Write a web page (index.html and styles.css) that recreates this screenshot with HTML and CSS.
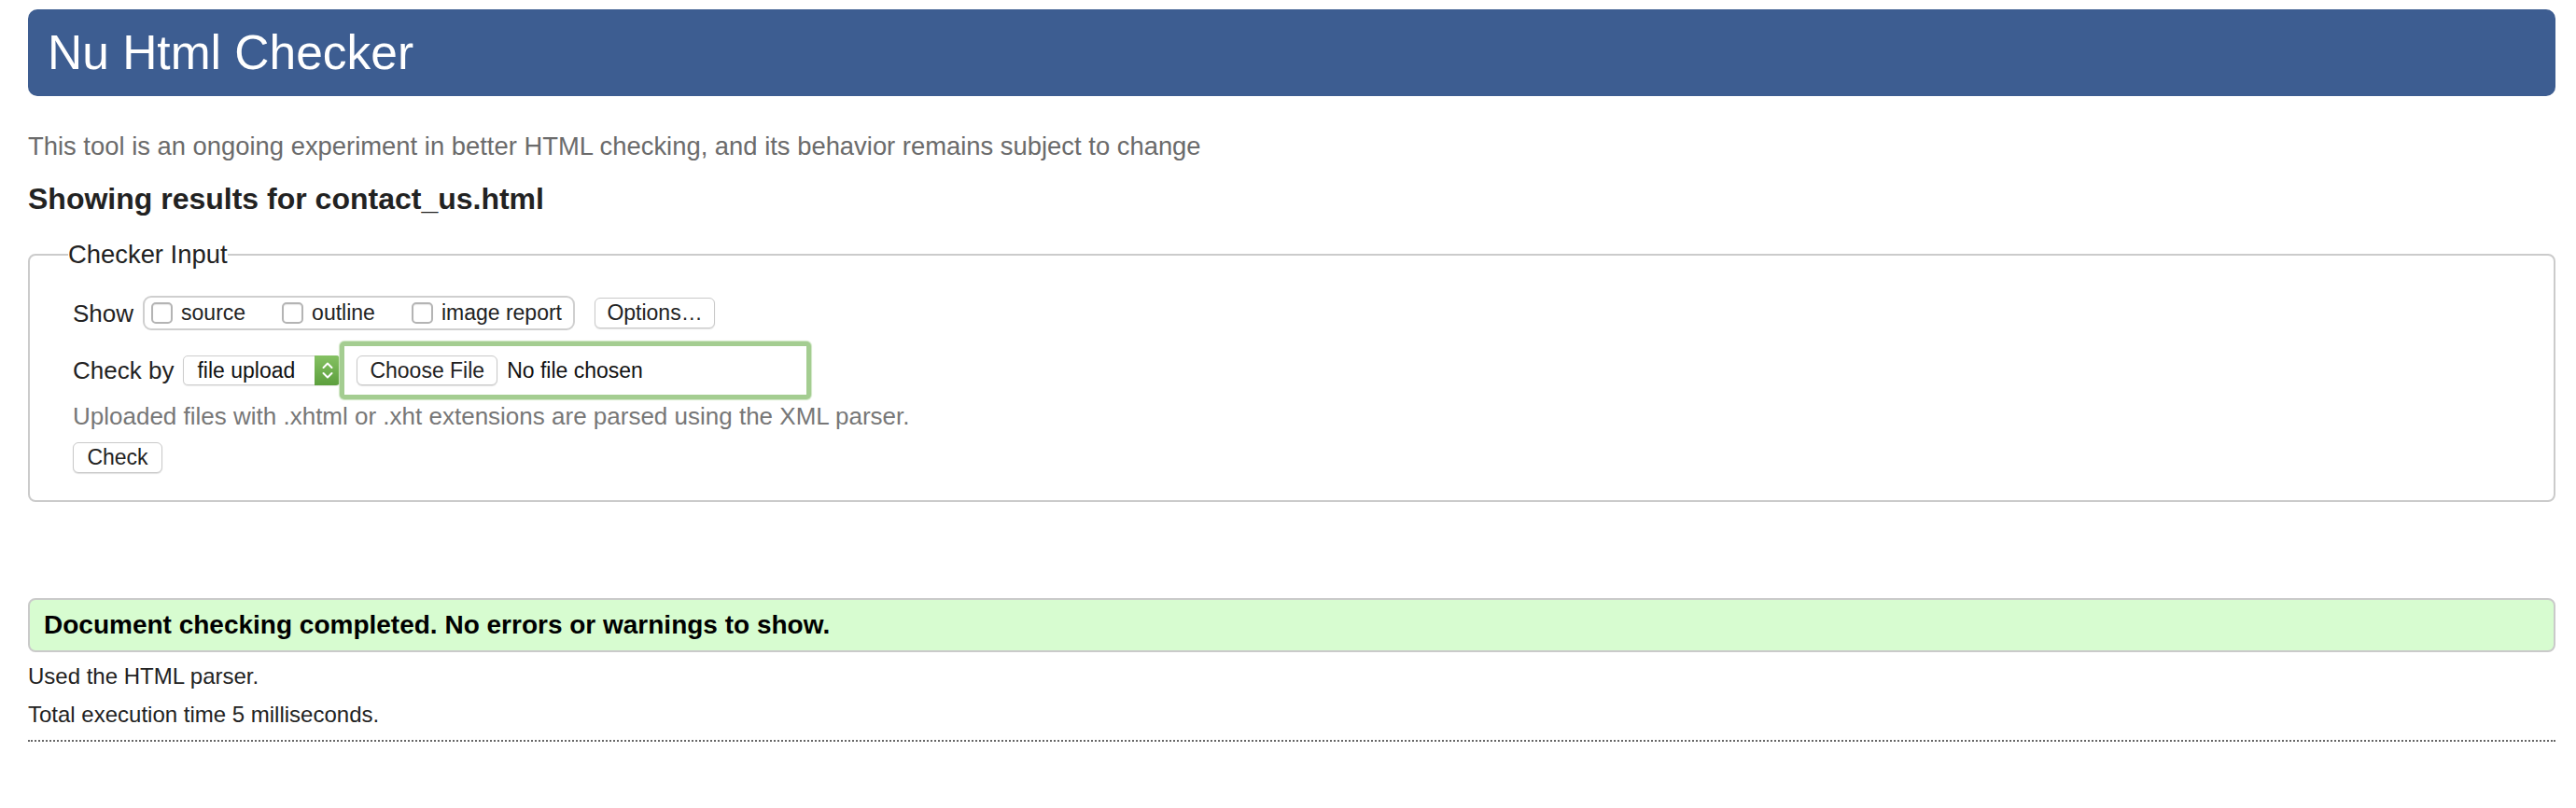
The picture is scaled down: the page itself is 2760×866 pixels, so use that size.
FILE: index.html
```html
<!DOCTYPE html>
<html lang="en">
<head>
<meta charset="utf-8">
<title>Nu Html Checker</title>
<link rel="stylesheet" href="styles.css">
</head>
<body>
<h1 class="title">Nu Html Checker</h1>
<p class="intro">This tool is an ongoing experiment in better HTML checking, and its behavior remains subject to change</p>
<h2 class="subject">Showing results for contact_us.html</h2>
<form class="checker-form">
  <fieldset class="checker">
    <legend class="checker-legend">Checker Input</legend>
    <div class="row">
      <span class="label">Show</span>
      <span class="group">
        <label class="opt"><span class="cb"></span>source</label>
        <label class="opt"><span class="cb"></span>outline</label>
        <label class="opt"><span class="cb"></span>image report</label>
      </span>
      <span class="btn options">Options…</span>
    </div>
    <div class="row row-by">
      <span class="label">Check by</span>
      <span class="select">
        <span class="select-text">file upload</span>
        <span class="stepper">
          <svg width="28" height="32" viewBox="0 0 28 32"><path d="M9.5 13 L14 8.5 L18.5 13 M9.5 19 L14 23.5 L18.5 19" fill="none" stroke="#fff" stroke-width="2" stroke-linecap="round" stroke-linejoin="round"/></svg>
        </span>
      </span>
      <span class="filebox">
        <span class="btn choose">Choose File</span>
        <span class="nofile">No file chosen</span>
      </span>
    </div>
    <p class="hint">Uploaded files with .xhtml or .xht extensions are parsed using the XML parser.</p>
    <span class="btn check">Check</span>
  </fieldset>
</form>
<div class="success">Document checking completed. No errors or warnings to show.</div>
<p class="details">Used the HTML parser.</p>
<p class="details">Total execution time 5 milliseconds.</p>
<hr class="dotted">
</body>
</html>
```
FILE: styles.css
```css
html, body {
  background: #fff;
}
body {
  margin: 0;
  padding: 10px 22px 0 30px;
  font-family: "Liberation Sans", Arial, Helvetica, sans-serif;
  color: #222;
}
.title {
  margin: 0;
  height: 93px;
  line-height: 93px;
  padding-left: 21px;
  font-size: 51.5px;
  font-weight: normal;
  color: #fff;
  background: #3d5d91;
  border-radius: 10px;
}
.intro {
  margin: 39px 0 0;
  font-size: 27.4px;
  line-height: 30px;
  color: #6b6b6b;
}
.subject {
  margin: 23px 0 30px;
  font-size: 32px;
  line-height: 36px;
  font-weight: bold;
  color: #222;
}
.checker-form {
  margin: 0;
}
.checker {
  margin: 0;
  border: 2px solid #cbcbcb;
  border-radius: 8px;
  padding: 32px 20px 29px 46px;
  min-inline-size: 0;
}
.checker-legend {
  margin-left: -5px;
  padding: 0;
  font-size: 27.4px;
  line-height: 24px;
  color: #222;
}
.row {
  display: flex;
  align-items: center;
}
.row-by {
  margin-top: 12px;
}
.label {
  font-size: 26px;
  line-height: 30px;
  color: #222;
  margin-right: 10px;
  white-space: nowrap;
}
.group {
  display: flex;
  align-items: center;
  height: 33px;
  border: 2px solid #cfcfcf;
  border-radius: 9px;
  padding: 0 12px 0 7px;
  gap: 39px;
}
.opt {
  display: flex;
  align-items: center;
  gap: 9px;
  font-size: 23px;
  color: #222;
  white-space: nowrap;
}
.cb {
  display: inline-block;
  width: 19px;
  height: 19px;
  border: 2px solid #b4b4b4;
  border-radius: 5px;
  background: #fff;
  box-shadow: inset 0 1px 1px rgba(0,0,0,0.08);
}
.btn {
  display: inline-flex;
  align-items: center;
  justify-content: center;
  box-sizing: border-box;
  height: 33px;
  padding: 0 15px;
  font-size: 23px;
  color: #222;
  background: #fff;
  border: 1px solid #c9c9c9;
  border-radius: 6px;
  box-shadow: 0 1px 1px rgba(0,0,0,0.12);
  white-space: nowrap;
}
.options {
  margin-left: 21px;
  width: 129px;
}
.select {
  display: flex;
  align-items: stretch;
  box-sizing: border-box;
  width: 169px;
  height: 32px;
  border: 1px solid #cdcdcd;
  border-radius: 5px;
  background: #fff;
  box-shadow: 0 1px 1px rgba(0,0,0,0.08);
}
.select-text {
  flex: 1;
  display: flex;
  align-items: center;
  padding-left: 14px;
  font-size: 23px;
  color: #111;
  white-space: nowrap;
}
.stepper {
  width: 28px;
  margin: -1px -1px -1px 0;
  border-radius: 0 5px 5px 0;
  background: linear-gradient(#85c163, #5c9f3d);
  display: flex;
  align-items: center;
  justify-content: center;
}
.stepper svg {
  display: block;
}
.filebox {
  display: flex;
  align-items: center;
  box-sizing: border-box;
  width: 505px;
  height: 62px;
  margin-left: -1px;
  padding: 0 13px;
  border: 5px solid #a4cd91;
  border-radius: 5px;
  box-shadow: 0 0 1px 1px #cfe6c4;
  background: #fff;
}
.choose {
  height: 32px;
  padding: 0 13px;
}
.nofile {
  margin-left: 10px;
  font-size: 23px;
  color: #111;
  white-space: nowrap;
}
.hint {
  margin: 3px 0 13px;
  font-size: 26px;
  line-height: 30px;
  color: #777;
}
.check {
  width: 96px;
  padding: 0 15px;
}
.success {
  margin-top: 103px;
  box-sizing: border-box;
  height: 58px;
  line-height: 54px;
  padding-left: 15px;
  border: 2px solid #cacaca;
  border-radius: 8px;
  background: #d7fcd0;
  font-size: 28px;
  font-weight: bold;
  color: #000;
}
.details {
  margin: 12px 0 0;
  font-size: 24px;
  line-height: 28px;
  color: #222;
}
.details + .details {
  margin-top: 13px;
}
.dotted {
  margin: 13px 0 0;
  height: 0;
  border: 0;
  border-top: 2px dotted #666;
}
```
